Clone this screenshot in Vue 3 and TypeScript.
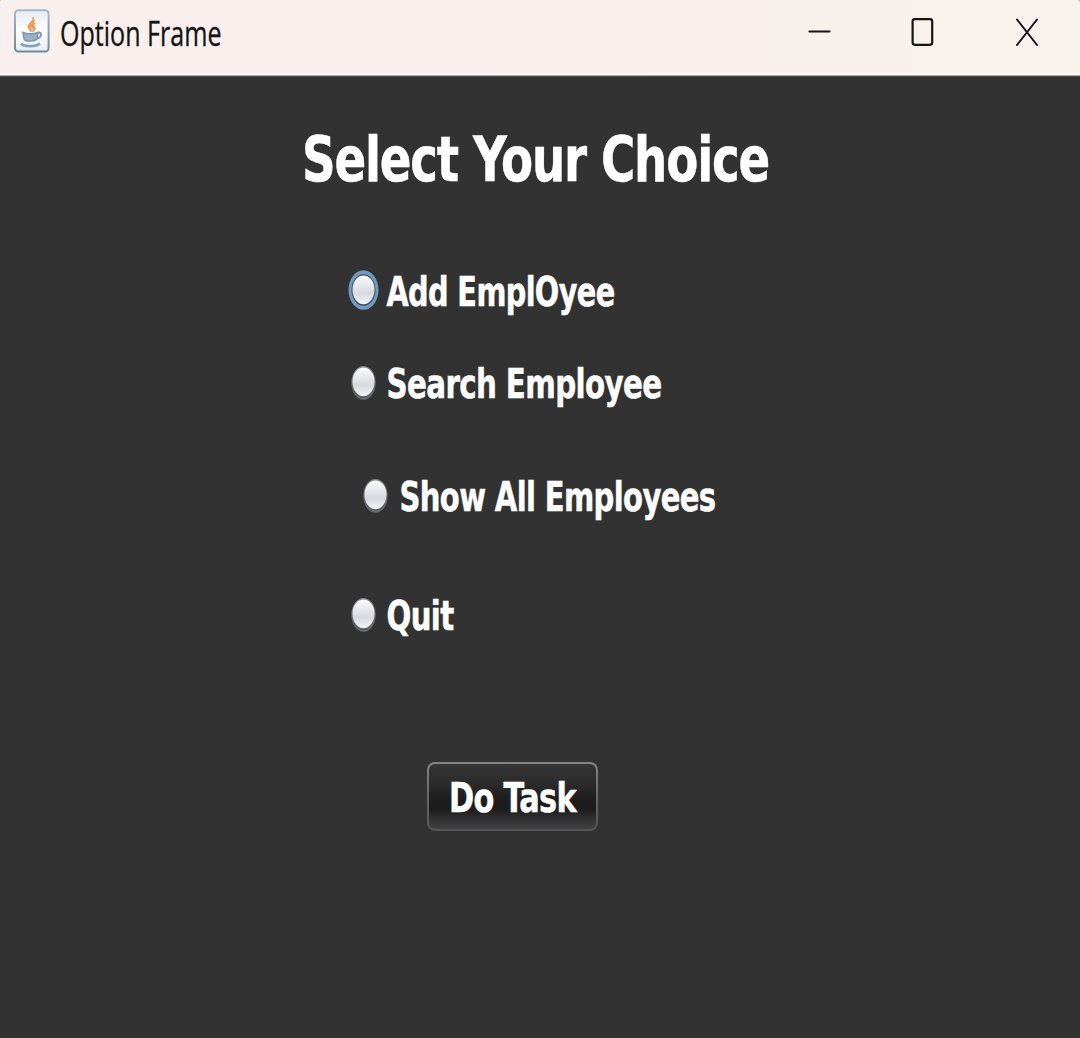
<script setup lang="ts">
interface Choice {
  label: string
  width: number
  indent: number
  gap: number
  focused: boolean
}

const choices: Choice[] = [
  { label: 'Add EmplOyee', width: 228, indent: 0, gap: 32, focused: true },
  { label: 'Search Employee', width: 275, indent: 0, gap: 53, focused: false },
  { label: 'Show All Employees', width: 316, indent: 12.5, gap: 59, focused: false },
  { label: 'Quit', width: 67, indent: 0, gap: 0, focused: false },
]
</script>

<template>
  <div class="window">
    <header class="titlebar">
      <svg class="java" width="36" height="44" viewBox="0 0 36 44">
        <defs>
          <linearGradient id="tile" x1="0" y1="0" x2="0" y2="1">
            <stop offset="0" stop-color="#e6ecf1" />
            <stop offset=".5" stop-color="#ffffff" />
            <stop offset="1" stop-color="#e9edf1" />
          </linearGradient>
          <linearGradient id="rim" x1="0" y1="0" x2="0" y2="1">
            <stop offset="0" stop-color="#a3b8cb" />
            <stop offset="1" stop-color="#6d889f" />
          </linearGradient>
        </defs>
        <rect x="1" y="1.2" width="33.6" height="41.4" rx="3.5" fill="url(#tile)" stroke="url(#rim)" stroke-width="2" />
        <path d="M19 8c1 4-5 6-5 10 0 2 2 3 3 5 1-3-1-4 1-6 2-2 3-5 1-9zM21 14c-3 2-4 4-2 6 1 1 0 2-1 3 4-2 4-4 2-6 0-1 0-2 1-3z" fill="#f0a060" stroke="#e99a58" stroke-width="1" />
        <path d="M9 23.500c4 1.800 11 1.800 15 0l-1 6c-1 3-12 4-13 0z" fill="#9ab0c4" stroke="#7d98b0" stroke-width="1.500" />
        <path d="M24 24c4-2 4.500 4-1 5.500" fill="none" stroke="#7e99b0" stroke-width="2" />
        <path d="M7 34.500c2 3.500 15 3.500 19 0" fill="none" stroke="#86a0b6" stroke-width="2.600" />
      </svg>
      <svg class="caption" width="240" height="60">
        <text x="0" y="37" textLength="161.500" lengthAdjust="spacingAndGlyphs">Option Frame</text>
      </svg>
      <svg class="controls" width="240" height="40" fill="none" stroke="#151313" stroke-width="2.200" stroke-linecap="round">
        <path d="M9.500 21.500H29.500" />
        <rect x="112.600" y="9.200" width="19.600" height="25.600" rx="2.200" />
        <path d="M217 9.500L237 35M237 9.500L217 35" stroke-width="2" />
      </svg>
      <i class="corner left"></i>
      <i class="corner right"></i>
    </header>

    <main class="panel">
      <svg class="heading" width="480" height="80">
        <text x="0" y="56" textLength="467" lengthAdjust="spacingAndGlyphs">Select Your Choice</text>
      </svg>

      <div class="choices">
        <label
          v-for="c in choices"
          :key="c.label"
          class="choice"
          :style="{ marginLeft: c.indent + 'px', marginBottom: c.gap + 'px' }"
        >
          <svg class="radio" width="32" height="44" viewBox="0 0 32 44">
            <defs>
              <linearGradient id="ball" x1="0" y1="0" x2="0" y2="1">
                <stop offset="0" stop-color="#fbfbfc" />
                <stop offset=".5" stop-color="#dfe0e6" />
                <stop offset=".62" stop-color="#d6d8df" />
                <stop offset="1" stop-color="#f5f6fa" />
              </linearGradient>
              <linearGradient id="edge" x1="0" y1="0" x2="0" y2="1">
                <stop offset="0" stop-color="#85878a" />
                <stop offset="1" stop-color="#55585c" />
              </linearGradient>
            </defs>
            <template v-if="c.focused">
              <ellipse cx="15.500" cy="20" rx="15" ry="19.800" fill="#6f9bc3" />
              <ellipse cx="15.500" cy="20" rx="12" ry="15.800" fill="#424d59" />
            </template>
            <template v-else>
              <ellipse cx="15.500" cy="21.500" rx="12" ry="16.300" fill="#6a6d71" />
              <ellipse cx="15.500" cy="20" rx="12" ry="16" fill="url(#edge)" />
            </template>
            <ellipse cx="15.500" cy="19.800" rx="11" ry="14.400" fill="url(#ball)" />
          </svg>
          <svg class="label" :width="c.width + 10" height="60">
            <text x="-0.500" y="43" :textLength="c.width" lengthAdjust="spacingAndGlyphs">{{ c.label }}</text>
          </svg>
        </label>
      </div>

      <button class="task" type="button">
        <svg width="140" height="60">
          <text x="0" y="45" textLength="127" lengthAdjust="spacingAndGlyphs">Do Task</text>
        </svg>
      </button>
    </main>
  </div>
</template>

<style>
body {
  margin: 0;
  background: #323232;
}
</style>

<style scoped>
.window {
  width: 1080px;
  height: 1038px;
  display: flex;
  flex-direction: column;
  background: #323232;
  overflow: hidden;
}
svg {
  display: block;
  flex: none;
  overflow: visible;
}
.titlebar {
  position: relative;
  box-sizing: border-box;
  height: 77px;
  flex: none;
  display: flex;
  align-items: flex-start;
  padding: 9px 40px 0 14px;
  background: linear-gradient(90deg, #f9efed, #f9f1ec);
  border-bottom: 1px solid #4e4d4d;
  box-shadow: inset 0 -1px #a9a6a3, inset 0 -3px #fffaf7;
}
.caption {
  margin-left: 10px;
}
.caption text {
  font: 34px "Open Sans", "Noto Sans", sans-serif;
  fill: #141212;
  stroke: #141212;
  stroke-width: 0.3px;
}
.controls {
  margin-left: auto;
  margin-top: 1px;
}
.corner {
  position: absolute;
  top: 0;
  width: 4px;
  height: 7px;
}
.left {
  left: 0;
  background: radial-gradient(ellipse at 100% 100%, transparent 80%, #bcb6b6 100%);
}
.right {
  right: 0;
  background: radial-gradient(ellipse at 0 100%, transparent 70%, #a9a7ae 100%);
}
.panel {
  flex: 1;
  display: flex;
  flex-direction: column;
  align-items: flex-start;
}
.heading {
  margin: 48px 0 0 302px;
}
.heading text,
.label text,
.task text {
  font-family: "DejaVu Sans Condensed", "DejaVu Sans", sans-serif;
  font-weight: bold;
  fill: #fff;
  stroke: #fff;
  stroke-width: 0.5px;
}
.heading text {
  font-size: 62.500px;
  letter-spacing: -1.400px;
}
.choices {
  margin: 58px 0 0 347.500px;
  display: flex;
  flex-direction: column;
}
.choice {
  height: 60px;
  display: flex;
  align-items: flex-start;
}
.radio {
  margin-top: 7px;
}
.label {
  margin-left: 7.500px;
}
.label text,
.task text {
  font-size: 40.500px;
  letter-spacing: -0.800px;
}
.task {
  box-sizing: border-box;
  width: 171px;
  height: 69px;
  margin: 115px 0 0 427px;
  padding: 0 0 0 20px;
  display: flex;
  align-items: center;
  border: 2px solid transparent;
  border-radius: 8px;
  background:
    linear-gradient(#353535 0%, #292929 35%, #1e1e1e 52%, #1d1d1d 70%, #333 86%, #414141 100%) padding-box,
    linear-gradient(#858585, #66676a 50%, #535458) border-box;
}
</style>
